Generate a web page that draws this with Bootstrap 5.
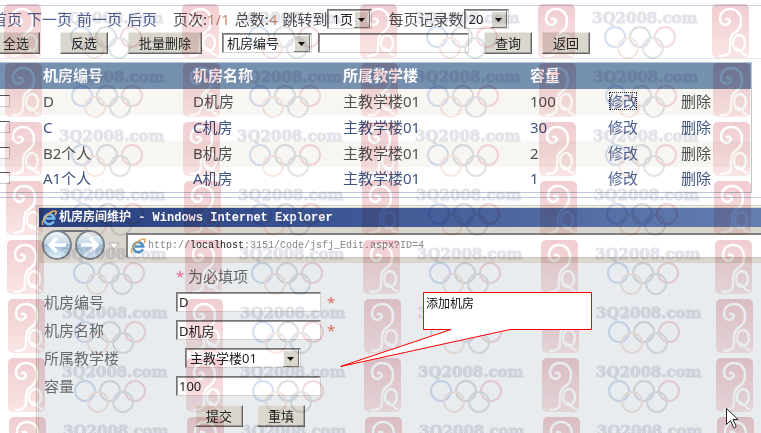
<!DOCTYPE html>
<html lang="zh-CN">
<head>
<meta charset="utf-8">
<meta name="viewport" content="width=device-width, initial-scale=1">
<title>机房房间维护</title>
<link href="https://cdn.jsdelivr.net/npm/bootstrap@5.3.0/dist/css/bootstrap.min.css" rel="stylesheet">
<style>
body{font-family:"Noto Sans","Noto Sans CJK SC",sans-serif;font-size:15px;line-height:20px;color:#505050;background:#fff}
.page{overflow:hidden;isolation:isolate}
.tools{border-top:1px solid #c6d2e4;border-bottom:1px solid #dfe6ee;margin-top:5px;padding-top:3px;height:54px}
.pager{gap:5px;margin-left:-8px;height:20px}
.pager a,.grid-list a{color:#526291;text-decoration:none}
.tail{margin-left:11px}
.num{color:#c98a70}
.actions{height:22px;margin-left:-8px;margin-top:3px;gap:20px}
.find-group{gap:6px}
.run-group{gap:10px;margin-left:-5px}
.ui-btn{font-size:13px;line-height:18px;height:22px;min-width:48px;padding:0 8px;color:#222;background:#d9d6ce;border:1px solid;border-color:#eceae4 #666 #666 #eceae4;box-shadow:inset -1px -1px #a5a29b;white-space:nowrap}
.ui-btn.wide{min-width:74px}
.ui-box{font-size:13px;line-height:16px;height:20px;padding:0 2px;color:#222;border:1px solid;border-color:#777 #d8d3cc #d8d3cc #777;box-shadow:inset 1px 1px #999;border-radius:0;background-color:#fff}
select.ui-box{appearance:none;padding-left:4px;padding-right:16px;background-repeat:no-repeat;background-position:right 1px center;background-image:url("data:image/svg+xml,%3Csvg xmlns='http://www.w3.org/2000/svg' width='16' height='17'%3E%3Cpath fill='%23d9d6ce' d='M0 0h16v17H0z'/%3E%3Cpath fill='none' stroke='%23777' d='M0 16.5h15.5V0'/%3E%3Cpath fill='none' stroke='%23fff' d='M.5 16V.5H15'/%3E%3Cpath fill='%23111' d='M4 7h7l-3.500 4z'/%3E%3C/svg%3E")}
.w-page{width:45px}.w-field{width:90px}.w-find{width:151px}.w-form{width:145px}.w-floor{width:116px}
.sheet{border-bottom:1px solid #c3d0df;padding-bottom:4px;margin-top:3px}
.grid-list{width:calc(100% - 9px);table-layout:fixed;border:1px solid #b8c8da;border-left:0;margin:0}
.grid-list th,.grid-list td{height:26px;padding:0;line-height:22px;padding-bottom:2px;white-space:nowrap;vertical-align:middle}
.grid-list th{background:#7690b0;color:#fff;font-weight:700}
.grid-list tbody tr:nth-child(odd){background:#f8f6f3}
.grid-list tbody tr:nth-child(even),.grid-list tbody tr:nth-child(even) .del{color:#405480}
.grid-list .del{color:#4c4c4c}
.c-tick{width:43px}.c-name{width:150px}.c-floor{width:187px}.c-size{width:78px}.c-edit{width:73px}
.tick{appearance:none;display:block;width:13px;height:12px;margin:0 0 0 -3px;background:#fff;border:1px solid #ccc;border-top:1px solid #555}
.grid-list a.focused{outline:1px dotted #222;outline-offset:-2px}
.pop{margin:7px 0 0 36px;border:1px solid #d1cdc7;border-right:0;border-bottom:0;padding:2px 0 0 2px;background:#dad6ce;box-shadow:inset 1px 1px #f5f3ef}
.pop-title{height:19px;padding-left:2px;gap:2px;color:#fff;font:bold 12px/18px "Liberation Mono","Noto Sans CJK SC",monospace;background:linear-gradient(90deg,#29417e,#3c5593 40%,#657eb0);white-space:pre}
.pop-bar{height:36px;gap:3px;padding-left:2px}
.address{height:25px;margin-left:2px;padding-left:2px;gap:2px;border:2px solid #858080;border-right:0;border-bottom:1px solid #c9c4bc;background:#fff;font:10px/20px "Liberation Mono",monospace;color:#858585}
.address b{font-weight:400;color:#222}
.pop-body{background:#e8ecef;padding:0 0 0 5px;color:#68696a}
.f-row{height:28px}
.f-row.hint{height:25px}
.f-row label,.f-lead{width:132px;flex:none}
.star{color:#d96b5c;width:12px;flex:none}
.hint .star{color:#ed65a1}
.ui-box+.star{margin-left:6px}
.f-select{margin-left:9px}
.f-btns{height:32px;gap:14px;padding-left:151px}
.marks{position:absolute;inset:0;width:100%;height:100%;z-index:2;mix-blend-mode:multiply;pointer-events:none}
.marks text{font:bold 15px "DejaVu Serif",serif;fill:#e3e3ea;stroke:#e3e3ea;stroke-width:1px}
.callout-note{position:absolute;left:340px;top:292px;width:252px;height:76px;z-index:3}
.callout-note p{position:absolute;left:86px;top:3px;margin:0;font-size:12px;line-height:18px;color:#111}
.pointer{position:absolute;left:726px;top:408px;z-index:3}
</style>
<script src="https://cdn.jsdelivr.net/npm/bootstrap@5.3.0/dist/js/bootstrap.bundle.min.js"></script>
</head>
<body>
<div class="page vh-100 d-flex flex-column position-relative">
  <header class="tools flex-shrink-0">
    <nav class="pager d-flex align-items-center text-nowrap" aria-label="分页">
      <a href="#">首页</a><a href="#">下一页</a><a href="#">前一页</a><a href="#">后页</a>
      <span class="tail">页次:<span class="num">1/1</span></span>
      <span>总数:<span class="num">4</span></span>
      <span class="d-flex align-items-center"><label for="jump">跳转到</label><select id="jump" class="ui-box w-page"><option>1页</option></select></span>
      <span class="tail d-flex align-items-center"><label for="per">每页记录数</label><select id="per" class="ui-box w-page"><option>20</option></select></span>
    </nav>
    <div class="actions d-flex align-items-center">
      <button type="button" class="ui-btn">全选</button>
      <button type="button" class="ui-btn">反选</button>
      <button type="button" class="ui-btn wide">批量删除</button>
      <div class="find-group d-flex align-items-center">
        <select class="ui-box w-field" aria-label="查询字段"><option>机房编号</option></select>
        <input class="ui-box w-find" type="text" aria-label="查询内容">
      </div>
      <div class="run-group d-flex">
        <button type="button" class="ui-btn">查询</button>
        <button type="button" class="ui-btn">返回</button>
      </div>
    </div>
  </header>

  <div class="sheet flex-shrink-0">
    <table class="grid-list">
      <colgroup><col class="c-tick"><col class="c-name"><col class="c-name"><col class="c-floor"><col class="c-size"><col class="c-edit"><col></colgroup>
      <thead><tr><th></th><th>机房编号</th><th>机房名称</th><th>所属教学楼</th><th>容量</th><th></th><th></th></tr></thead>
      <tbody>
        <tr><td><input type="checkbox" class="tick" aria-label="D"></td><td>D</td><td>D机房</td><td>主教学楼01</td><td>100</td><td><a href="#" class="focused">修改</a></td><td><a href="#" class="del">删除</a></td></tr>
        <tr><td><input type="checkbox" class="tick" aria-label="C"></td><td>C</td><td>C机房</td><td>主教学楼01</td><td>30</td><td><a href="#">修改</a></td><td><a href="#" class="del">删除</a></td></tr>
        <tr><td><input type="checkbox" class="tick" aria-label="B2个人"></td><td>B2个人</td><td>B机房</td><td>主教学楼01</td><td>2</td><td><a href="#">修改</a></td><td><a href="#" class="del">删除</a></td></tr>
        <tr><td><input type="checkbox" class="tick" aria-label="A1个人"></td><td>A1个人</td><td>A机房</td><td>主教学楼01</td><td>1</td><td><a href="#">修改</a></td><td><a href="#" class="del">删除</a></td></tr>
      </tbody>
    </table>
  </div>

  <section class="pop flex-grow-1 d-flex flex-column">
    <div class="pop-title d-flex align-items-center flex-shrink-0">
      <svg width="16" height="16" viewBox="0 0 16 16" fill="none" aria-hidden="true"><path d="M12.800 11.300A5 5 0 1 1 13.200 8.500H5" stroke="#79b9ec" stroke-width="2.600"/><path d="M2 15C-1 12 8 1 14 1c2 0 1 3 0 4" stroke="#f0b95c" stroke-width="1.500"/></svg>
      <span>机房房间维护 - Windows Internet Explorer</span>
    </div>
    <div class="pop-bar d-flex align-items-center flex-shrink-0">
      <svg width="80" height="33" viewBox="0 0 80 33" aria-hidden="true">
        <defs><linearGradient id="glass" x2="0" y2="1"><stop stop-color="#f4f8fb"/><stop offset=".45" stop-color="#c5d8e8"/><stop offset=".5" stop-color="#9ebcd6"/><stop offset="1" stop-color="#eaf6fc"/></linearGradient></defs>
        <path d="M16 2h33" stroke="#6f7378" stroke-width="2"/>
        <g fill="url(#glass)" stroke="#7b838b" stroke-width="2"><circle cx="16" cy="16" r="14"/><circle cx="49" cy="16" r="14"/></g>
        <g fill="none" stroke="#fff" stroke-width="3.500"><path d="M25 16H9M16 9l-7 7 7 7"/><path d="M40 16h16M49 9l7 7-7 7"/></g>
        <path d="M68 14h10l-5 6z" fill="#fff" stroke="#b8a4a6"/>
      </svg>
      <div class="address d-flex align-items-center flex-grow-1">
        <svg width="16" height="16" viewBox="0 0 16 16" fill="none" aria-hidden="true"><path d="M12.800 11.300A5 5 0 1 1 13.200 8.500H5" stroke="#4f94cc" stroke-width="2.600"/><path d="M2 15C-1 12 8 1 14 1c2 0 1 3 0 4" stroke="#dda653" stroke-width="1.500"/></svg>
        <span>http://<b>localhost</b>:3151/Code/jsfj_Edit.aspx?ID=4</span>
      </div>
    </div>
    <form class="pop-body flex-grow-1">
      <div class="f-row hint d-flex align-items-center"><span class="f-lead"></span><span class="star">*</span><span>为必填项</span></div>
      <div class="f-row d-flex align-items-center"><label for="no">机房编号</label><input id="no" class="ui-box w-form" value="D"><span class="star">*</span></div>
      <div class="f-row d-flex align-items-center"><label for="nm">机房名称</label><input id="nm" class="ui-box w-form" value="D机房"><span class="star">*</span></div>
      <div class="f-row d-flex align-items-center"><label for="fl">所属教学楼</label><select id="fl" class="ui-box w-floor f-select"><option>主教学楼01</option></select></div>
      <div class="f-row d-flex align-items-center"><label for="sz">容量</label><input id="sz" class="ui-box w-form" value="100"></div>
      <div class="f-btns d-flex align-items-center"><button type="button" class="ui-btn">提交</button><button type="reset" class="ui-btn">重填</button></div>
    </form>
  </section>

  <svg class="marks" id="marks" aria-hidden="true">
    <defs>
      <linearGradient id="seal" x2="0" y2="1"><stop stop-color="#f0cdd0"/><stop offset="1" stop-color="#fae5e5"/></linearGradient>
      <g id="logo"><rect width="37" height="54" rx="5" fill="url(#seal)"/><g fill="none" stroke="#fff" stroke-linecap="round"><path d="M14 15c3-1 5 2 3 4-3 4-9 1-9-4C8 9 12 5 18 5c7 0 11 5 11 12 0 9-5 10-8 13-3 3-3 6-3 10v5c0 5-4 7-10 7" stroke-width="2.500"/><ellipse cx="27" cy="39" rx="6" ry="8" stroke-width="2.500"/><path d="M24 44c4 0 5 7 10 7" stroke-width="2"/></g></g>
      <g id="rings" fill="none" stroke-width="2"><circle cx="23" cy="33" r="10" stroke="#d5e0f3"/><circle cx="48" cy="33" r="10" stroke="#dddfe4"/><circle cx="73" cy="33" r="10" stroke="#f5dadd"/><circle cx="36" cy="44" r="10" stroke="#f7e8e3"/><circle cx="61" cy="44" r="10" stroke="#e0e4e9"/></g>
    </defs>
  </svg>

  <aside class="callout-note">
    <svg width="252" height="76" aria-hidden="true"><path d="M83.500.5h168v37H170L.5 74.500 111 37.500H83.500z" fill="#fff" stroke="#f00"/></svg>
    <p>添加机房</p>
  </aside>
  <svg class="pointer" width="14" height="22" viewBox="0 0 14 22" aria-hidden="true"><path d="M.5.5v16l4-4 3 7c1 1 3 0 2.500-1.500l-3-6.500H12z" fill="#fff" stroke="#222"/></svg>
</div>
<script>
const marks = document.getElementById('marks'), ns = 'http://www.w3.org/2000/svg';
function put(tag, attrs, text) {
  const el = document.createElementNS(ns, tag);
  for (const k in attrs) el.setAttribute(k, attrs[k]);
  if (text) el.textContent = text;
  marks.append(el);
}
for (let row = 0; row < 8; row++) {
  const y = 4 + row * 59;
  for (let col = 0; col < 5; col++) {
    const x = 4 + col * 178 + Math.round(row * 0.7) - (col === 4 ? 4 : 0);
    put('use', {href: '#logo', x, y});
    if (col < 4) {
      put('text', {x: x + 54, y: y + 19}, '3Q2008.com');
      put('use', {href: '#rings', x: x + 54, y});
    }
  }
}
</script>
</body>
</html>
